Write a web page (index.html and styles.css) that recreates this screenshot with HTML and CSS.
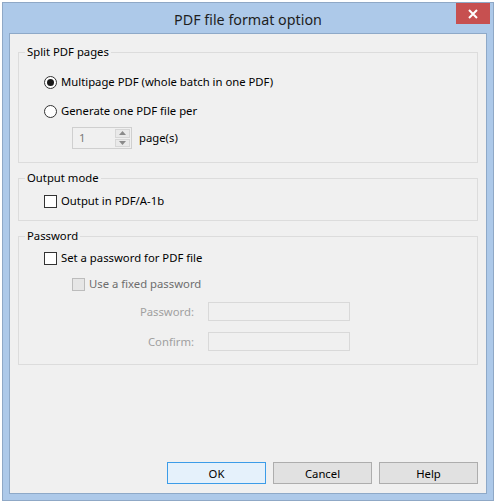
FILE: index.html
```html
<!DOCTYPE html>
<html lang="en">
<head>
<meta charset="utf-8">
<title>PDF file format option</title>
<link rel="stylesheet" href="styles.css">
</head>
<body>
<div class="window">
  <div class="titlebar">
    <span></span>
    <span class="title">PDF file format option</span>
    <span class="close-cell">
      <span class="close" aria-label="Close">
        <svg width="10" height="10" viewBox="0 0 10 10"><path d="M1 1 L9 9 M9 1 L1 9" stroke="#fff" stroke-width="2" fill="none"/></svg>
      </span>
    </span>
  </div>
  <div class="client">
    <section class="group">
      <div class="group-head"><span class="edge-start"></span><span class="caption">Split PDF pages</span><span class="edge-end"></span></div>
      <div class="group-body body-split">
        <label class="opt"><span class="radio checked"></span>Multipage PDF (whole batch in one PDF)</label>
        <label class="opt opt-second"><span class="radio"></span>Generate one PDF file per</label>
        <div class="spin-row">
          <div class="spin">
            <span class="spin-value">1</span>
            <span class="spin-btns">
              <span class="spin-btn"><svg width="7" height="4" viewBox="0 0 7 4"><path d="M0 4 L3.5 0 L7 4 Z" fill="#8a8a8a"/></svg></span>
              <span class="spin-btn"><svg width="7" height="4" viewBox="0 0 7 4"><path d="M0 0 L3.5 4 L7 0 Z" fill="#8a8a8a"/></svg></span>
            </span>
          </div>
          <span class="unit">page(s)</span>
        </div>
      </div>
    </section>

    <section class="group">
      <div class="group-head"><span class="edge-start"></span><span class="caption">Output mode</span><span class="edge-end"></span></div>
      <div class="group-body body-output">
        <label class="opt"><span class="check"></span>Output in PDF/A-1b</label>
      </div>
    </section>

    <section class="group">
      <div class="group-head"><span class="edge-start"></span><span class="caption">Password</span><span class="edge-end"></span></div>
      <div class="group-body body-password">
        <label class="opt"><span class="check"></span>Set a password for PDF file</label>
        <label class="opt sub disabled"><span class="check"></span>Use a fixed password</label>
        <div class="field field-first">
          <span class="field-label">Password:</span>
          <span class="input"></span>
        </div>
        <div class="field">
          <span class="field-label">Confirm:</span>
          <span class="input"></span>
        </div>
      </div>
    </section>

    <div class="buttons">
      <button class="btn default">OK</button>
      <button class="btn">Cancel</button>
      <button class="btn">Help</button>
    </div>
  </div>
</div>
</body>
</html>
```
FILE: styles.css
```css
html, body {
  margin: 0;
  padding: 0;
  background: #ffffff;
}

body {
  font-family: "Noto Sans", "Open Sans", sans-serif;
  font-size: 11.3px;
  color: #000;
}

/* window frame */
.window {
  box-sizing: border-box;
  width: 492px;
  height: 499px;
  margin: 2px 0 0 2px;
  border: 1px solid #8fa8c6;
  background: #adc9e9;
  padding: 0 6px 6px 6px;
  display: flex;
  flex-direction: column;
}

.titlebar {
  height: 30px;
  margin: 0 -6px;
  display: grid;
  grid-template-columns: 1fr auto 1fr;
  align-items: start;
}

.title {
  font-size: 14.3px;
  line-height: 20px;
  margin-top: 7px;
  color: #1e1e1e;
  white-space: nowrap;
}

.close-cell {
  display: flex;
  justify-content: flex-end;
  padding-right: 3px;
}

.close {
  width: 34px;
  height: 21px;
  background: #c75050;
  display: flex;
  align-items: center;
  justify-content: center;
}

/* client area */
.client {
  flex: 1;
  background: #f0f0f0;
  border: 1px solid #8ea9c8;
  padding: 10px 8px 9px 8px;
  display: flex;
  flex-direction: column;
  gap: 7px;
}

/* group boxes: the head row draws the top edge around the caption */
.group {
  display: flex;
  flex-direction: column;
}

.group-head {
  display: flex;
  height: 16px;
  line-height: 16px;
}

.edge-start,
.edge-end {
  align-self: flex-end;
  height: 7px;
  border-top: 1px solid #dcdcdc;
}

.edge-start {
  width: 6px;
  border-left: 1px solid #dcdcdc;
}

.edge-end {
  flex: 1;
  border-right: 1px solid #dcdcdc;
}

.caption {
  padding: 0 2px;
  white-space: nowrap;
}

.group-body {
  border: 1px solid #dcdcdc;
  border-top: none;
  padding-left: 25px;
  display: flex;
  flex-direction: column;
  align-items: flex-start;
}

.opt {
  display: flex;
  align-items: center;
  height: 16px;
  line-height: 16px;
  gap: 4px;
}

.radio {
  box-sizing: border-box;
  width: 13px;
  height: 13px;
  border: 1px solid #333;
  border-radius: 50%;
  background: #fff;
  position: relative;
  flex: none;
}

.radio.checked::after {
  content: "";
  position: absolute;
  left: 2px;
  top: 2px;
  width: 7px;
  height: 7px;
  border-radius: 50%;
  background: #1a1a1a;
}

.check {
  box-sizing: border-box;
  width: 13px;
  height: 13px;
  border: 1px solid #333;
  background: #fff;
  flex: none;
}

/* split group */
.body-split { padding-top: 14px; padding-bottom: 13px; }
.body-split .opt-second { margin-top: 13px; }

.spin-row {
  margin-top: 8px;
  margin-left: 28px;
  display: flex;
  align-items: center;
  gap: 7px;
}

.spin {
  box-sizing: border-box;
  width: 60px;
  height: 22px;
  border: 1px solid #cfcfcf;
  background: #f0f0f0;
  display: flex;
  align-items: stretch;
}

.spin-value {
  flex: 1;
  padding-left: 6px;
  line-height: 20px;
  color: #7a7a7a;
}

.spin-btns {
  width: 15px;
  display: flex;
  flex-direction: column;
  padding: 1px 1px 1px 0;
  gap: 1px;
}

.spin-btn {
  flex: 1;
  display: flex;
  align-items: center;
  justify-content: center;
  background: #e9e9e9;
  border: 1px solid #d6d6d6;
}

.unit { line-height: 16px; }

/* output group */
.body-output { padding-top: 7px; padding-bottom: 11px; }

/* password group */
.body-password { padding-top: 6px; padding-bottom: 13px; }
.body-password .opt.sub {
  margin-top: 10px;
  margin-left: 28px;
}

.disabled { color: #6d6d6d; }
.disabled .check {
  border-color: #bcbcbc;
  background: #e6e6e6;
}

.field {
  display: flex;
  align-items: center;
  margin-top: 11px;
  margin-left: 28px;
}
.field-first { margin-top: 10px; }

.field-label {
  width: 122px;
  text-align: right;
  color: #a0a0a0;
  padding-right: 14px;
}

.input {
  box-sizing: border-box;
  width: 142px;
  height: 19px;
  border: 1px solid #d9d9d9;
  background: #f0f0f0;
}

/* dialog buttons */
.buttons {
  margin-top: auto;
  display: flex;
  justify-content: flex-end;
  gap: 7px;
}

.btn {
  box-sizing: border-box;
  width: 99px;
  height: 22px;
  font: inherit;
  color: #000;
  background: #e1e1e1;
  border: 1px solid #adadad;
  padding: 0;
  margin: 0;
}

.btn.default {
  border-color: #3c9ce8;
  background: #e5f1fb;
}
```
